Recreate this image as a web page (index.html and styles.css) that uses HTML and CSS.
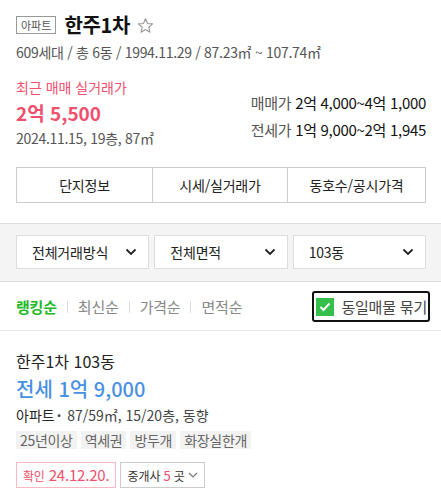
FILE: index.html
```html
<!DOCTYPE html>
<html lang="ko">
<head>
<meta charset="utf-8">
<link rel="stylesheet" href="styles.css">
</head>
<body>
<div class="page">
  <section class="head">
    <div class="title-row">
      <span class="badge">아파트</span>
      <h1 class="title">한주1차</h1>
      <svg class="star" width="17" height="17" viewBox="0 0 24 24"><path d="M12 2.5l2.9 6.6 7.1.6-5.4 4.7 1.6 7-6.2-3.7-6.2 3.7 1.6-7L2 9.7l7.1-.6z" fill="none" stroke="#999" stroke-width="1.6" stroke-linejoin="round"/></svg>
    </div>
    <div class="meta">609세대 / 총 6동 / 1994.11.29 / 87.23㎡ ~ 107.74㎡</div>
    <div class="price-area">
      <div class="recent">
        <div class="recent-label">최근 매매 실거래가</div>
        <div class="recent-price">2억 5,500</div>
        <div class="recent-info">2024.11.15, 19층, 87㎡</div>
      </div>
      <div class="ranges">
        <div class="range"><span class="rl">매매가</span> <span class="rv">2억 4,000~4억 1,000</span></div>
        <div class="range"><span class="rl">전세가</span> <span class="rv">1억 9,000~2억 1,945</span></div>
      </div>
    </div>
    <div class="tabs">
      <div class="tab">단지정보</div>
      <div class="tab">시세/실거래가</div>
      <div class="tab">동호수/공시가격</div>
    </div>
  </section>
  <section class="filters">
    <div class="select"><span>전체거래방식</span><svg width="12" height="8" viewBox="0 0 12 8"><path d="M1.5 1.5l4.5 4.5 4.5-4.5" fill="none" stroke="#222" stroke-width="1.8"/></svg></div>
    <div class="select"><span>전체면적</span><svg width="12" height="8" viewBox="0 0 12 8"><path d="M1.5 1.5l4.5 4.5 4.5-4.5" fill="none" stroke="#222" stroke-width="1.8"/></svg></div>
    <div class="select"><span>103동</span><svg width="12" height="8" viewBox="0 0 12 8"><path d="M1.5 1.5l4.5 4.5 4.5-4.5" fill="none" stroke="#222" stroke-width="1.8"/></svg></div>
  </section>
  <section class="sort-row">
    <div class="sorts">
      <span class="sort active">랭킹순</span><span class="sep"></span>
      <span class="sort">최신순</span><span class="sep"></span>
      <span class="sort">가격순</span><span class="sep"></span>
      <span class="sort">면적순</span>
    </div>
    <div class="group-btn">
      <span class="check"><svg width="12" height="10" viewBox="0 0 12 10"><path d="M1.5 5l3 3 6-6.5" fill="none" stroke="#fff" stroke-width="2"/></svg></span>
      <span>동일매물 묶기</span>
    </div>
  </section>
  <section class="item">
    <div class="item-name">한주1차 103동</div>
    <div class="item-price">전세 1억 9,000</div>
    <div class="item-spec"><span class="type">아파트</span><span class="dot">·</span> 87/59㎡, 15/20층, 동향</div>
    <div class="tags">
      <span class="tag">25년이상</span>
      <span class="tag">역세권</span>
      <span class="tag">방두개</span>
      <span class="tag">화장실한개</span>
    </div>
    <div class="actions">
      <span class="confirm"><span class="ck">확인</span> 24.12.20.</span>
      <span class="agents">중개사 <em>5</em>곳 <svg width="10" height="6" viewBox="0 0 10 6"><path d="M1 1l4 4 4-4" fill="none" stroke="#777" stroke-width="1.2"/></svg></span>
    </div>
  </section>
</div>
</body>
</html>
```
FILE: styles.css
```css
* { box-sizing: border-box; }
html, body { margin: 0; padding: 0; background: #fff; }
body {
  font-family: "Noto Sans CJK KR", "Noto Sans", sans-serif;
  color: #222;
  width: 441px;
  overflow: hidden;
}
.head { padding: 10px 15px 0 16px; }
.title-row { display: flex; align-items: center; height: 30px; }
.badge {
  border: 1px solid #999;
  font-size: 11px;
  color: #555;
  height: 18px;
  line-height: 16px;
  padding: 0 4px;
  margin-right: 8px;
}
.title { font-size: 20px; font-weight: 700; margin: 0; letter-spacing: -0.3px; color: #111; line-height: 30px; }
.star { margin-left: 7px; }
.meta { font-size: 14px; color: #555; letter-spacing: -0.3px; line-height: 20px; margin-top: 2px; }
.price-area { display: flex; justify-content: space-between; align-items: flex-end; margin-top: 15px; }
.recent-label { font-size: 14px; color: #f0506e; line-height: 20px; letter-spacing: 0; }
.recent-price { font-size: 19px; font-weight: 700; color: #f0506e; line-height: 26px; margin-top: 3px; }
.recent-info { font-size: 14px; color: #555; line-height: 20px; letter-spacing: -0.3px; margin-top: 2px; }
.ranges { display: flex; flex-direction: column; gap: 7px; align-items: flex-end; padding-bottom: 8px; }
.range { font-size: 15px; line-height: 20px; letter-spacing: -0.3px; }
.rl { color: #555; }
.rv { color: #111; }
.tabs { display: grid; grid-template-columns: 135px 135px 1fr; border: 1px solid #ccc; margin-top: 19px; height: 36px; }
.tab { display: flex; align-items: center; justify-content: center; font-size: 14px; color: #222; letter-spacing: -0.2px; }
.tab + .tab { border-left: 1px solid #ccc; }
.filters {
  margin-top: 20px;
  background: #f4f4f4;
  border-top: 1px solid #ddd;
  border-bottom: 1px solid #ddd;
  padding: 11px 15px 12px 16px;
  display: grid;
  grid-template-columns: repeat(3, 1fr);
  gap: 5px;
}
.select {
  height: 34px;
  background: #fff;
  border: 1px solid #ddd;
  display: flex;
  align-items: center;
  justify-content: space-between;
  padding: 0 11px 0 15px;
  font-size: 14px;
  color: #222;
  letter-spacing: -0.2px;
}
.sort-row { display: flex; justify-content: space-between; align-items: center; height: 49px; padding: 1px 11px 0 16px; border-bottom: 1px solid #e5e5e5; }
.sorts { display: flex; align-items: center; }
.sort { font-size: 15px; color: #888; letter-spacing: -0.2px; }
.sort.active { color: #22b826; font-weight: 700; }
.sep { width: 1px; height: 12px; background: #ddd; margin: 0 10px; }
.group-btn {
  display: flex; align-items: center; gap: 7px;
  border: 2px solid #111; border-radius: 3px;
  height: 31px; padding: 0 1px 0 2px;
  font-size: 15px; color: #444; letter-spacing: -0.2px;
}
.check { width: 18px; height: 18px; background: #36be4b; display: flex; align-items: center; justify-content: center; }
.item { padding: 19px 16px 0; }
.item-name { font-size: 16px; color: #222; line-height: 22px; letter-spacing: 0; }
.item-price { font-size: 20px; font-weight: 500; color: #4a90e2; line-height: 28px; margin-top: 3px; }
.item-spec { font-size: 14px; color: #444; line-height: 20px; letter-spacing: 0; margin-top: 2px; }
.item-spec .type { color: #222; }
.dot { font-weight: 700; margin: 0 2px; }
.tags { display: flex; gap: 4px; margin-top: 6px; }
.tag { background: #f2f2f2; color: #666; font-size: 14px; line-height: 18px; padding: 0 4px; letter-spacing: -0.3px; }
.actions { display: flex; gap: 4px; margin-top: 13px; }
.confirm { border: 1px solid #f9b9c4; color: #f0506e; font-size: 15px; height: 26px; line-height: 24px; padding: 0 6px; letter-spacing: -0.2px; }
.confirm .ck { font-size: 12px; }
.agents { border: 1px solid #ccc; color: #333; font-size: 12px; height: 26px; padding: 0 6px; display: flex; align-items: center; gap: 3px; }
.agents em { font-style: normal; color: #f0506e; font-size: 13px; }
```
